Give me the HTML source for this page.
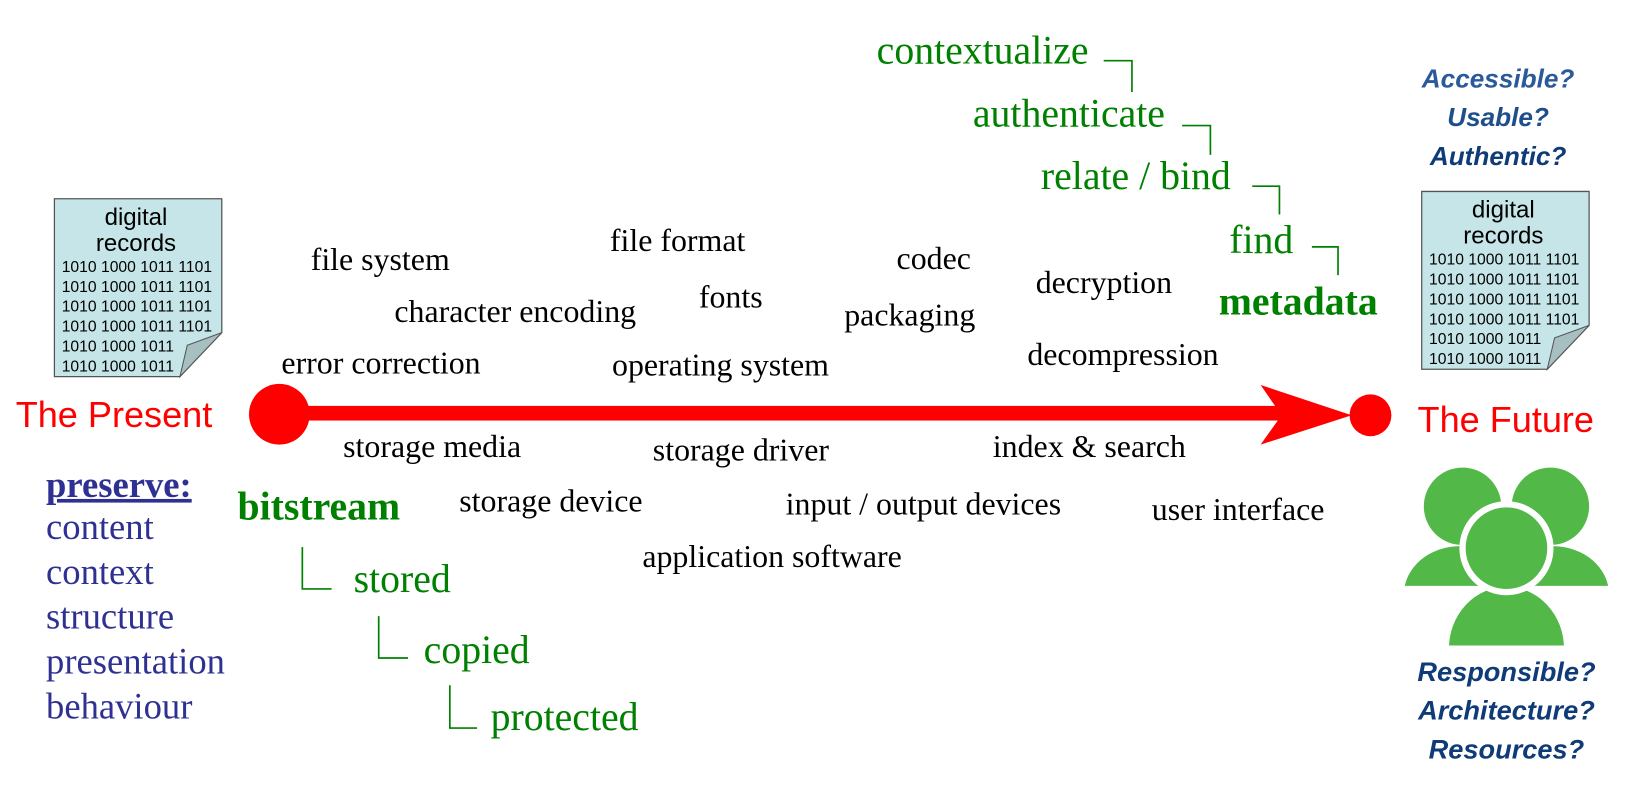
<!DOCTYPE html>
<html><head><meta charset="utf-8"><style>
html,body{margin:0;padding:0;background:#fff;width:1632px;height:794px;overflow:hidden}
svg{display:block}
.s{font-family:"Liberation Serif",serif;font-size:30.5px;fill:#000}
.g{font-family:"Liberation Serif",serif;fill:#008000}
.b{font-family:"Liberation Serif",serif;font-size:35px;fill:#2e3192}
.q{font-family:"Liberation Sans",sans-serif;font-weight:bold;font-style:italic;text-anchor:middle}
.r{font-family:"Liberation Sans",sans-serif;font-size:34.5px;fill:#ff0000}
.d{font-family:"Liberation Sans",sans-serif;fill:#000}
</style></head><body>
<svg width="1632" height="794" viewBox="0 0 1560 759" preserveAspectRatio="none">
<defs>
<g id="doc">
<polygon points="0,0 160,0 160,128 120,170 0,170" fill="#c5e5e8" stroke="#555" stroke-width="1.2"/>
<polygon points="160,128 120,170 127,140" fill="#a7bfc1" stroke="#555" stroke-width="1"/>
<text class="d" x="78" y="25" font-size="23" text-anchor="middle">digital</text>
<text class="d" x="78" y="50" font-size="23" text-anchor="middle">records</text>
<g class="d" font-size="15">
<text x="7" y="70">1010 1000 1011 1101</text>
<text x="7" y="89">1010 1000 1011 1101</text>
<text x="7" y="108">1010 1000 1011 1101</text>
<text x="7" y="127">1010 1000 1011 1101</text>
<text x="7" y="146">1010 1000 1011</text>
<text x="7" y="165">1010 1000 1011</text>
</g>
</g>
</defs>
<use href="#doc" x="52" y="190"/>
<use href="#doc" x="1359" y="183"/>

<g dominant-baseline="middle">
<text class="g" x="838" y="52" font-size="38">contextualize</text>
<text class="g" x="930" y="112" font-size="38">authenticate</text>
<text class="g" x="995" y="172" font-size="38">relate / bind</text>
<text class="g" x="1175" y="233" font-size="38">find</text>
<text class="g" x="1165" y="292" font-size="38" font-weight="bold">metadata</text>

<text class="q" x="1432" y="77" font-size="25" fill="#2a5a9a">Accessible?</text>
<text class="q" x="1432" y="114" font-size="25" fill="#1f4e8c">Usable?</text>
<text class="q" x="1432" y="151" font-size="25" fill="#0f3b78">Authentic?</text>
<text class="q" x="1440" y="644" font-size="26" fill="#0f3b78">Responsible?</text>
<text class="q" x="1440" y="681" font-size="26" fill="#0f3b78">Architecture?</text>
<text class="q" x="1440" y="718" font-size="26" fill="#0f3b78">Resources?</text>

<text class="r" x="15" y="399">The Present</text>
<text class="r" x="1355" y="404">The Future</text>

<text class="s" x="297" y="251">file system</text>
<text class="s" x="583" y="233">file format</text>
<text class="s" x="857" y="250">codec</text>
<text class="s" x="377" y="301">character encoding</text>
<text class="s" x="668" y="287">fonts</text>
<text class="s" x="807" y="304">packaging</text>
<text class="s" x="990" y="273">decryption</text>
<text class="s" x="269" y="350">error correction</text>
<text class="s" x="585" y="352">operating system</text>
<text class="s" x="982" y="342">decompression</text>
<text class="s" x="328" y="430">storage media</text>
<text class="s" x="624" y="433">storage driver</text>
<text class="s" x="949" y="430">index &amp; search</text>
<text class="s" x="439" y="482">storage device</text>
<text class="s" x="751" y="485">input / output devices</text>
<text class="s" x="1101" y="490">user interface</text>
<text class="s" x="614" y="535">application software</text>

<text class="b" x="44" y="467" font-weight="bold" text-decoration="underline">preserve:</text>
<text class="b" x="44" y="507">content</text>
<text class="b" x="44" y="550">context</text>
<text class="b" x="44" y="593">structure</text>
<text class="b" x="44" y="636">presentation</text>
<text class="b" x="44" y="679">behaviour</text>

<text class="g" x="227" y="488" font-size="38" font-weight="bold">bitstream</text>
<text class="g" x="338" y="557" font-size="38">stored</text>
<text class="g" x="405" y="625" font-size="38">copied</text>
<text class="g" x="469" y="689" font-size="38">protected</text>
</g>

<g fill="none" stroke="#008000" stroke-width="1.6">
<polyline points="1055,58 1082,58 1082,88"/>
<polyline points="1130,120 1157,120 1157,148"/>
<polyline points="1197,178 1223,178 1223,205"/>
<polyline points="1254,236 1279,236 1279,263"/>
<polyline points="289,523 289,563 317,563"/>
<polyline points="362,589 362,629 390,629"/>
<polyline points="430,655 430,696 456,696"/>
</g>

<g fill="#ff0000">
<rect x="267" y="388" width="960" height="14"/>
<polygon points="1205,368 1292,397 1205,425 1225,397"/>
<circle cx="267" cy="396" r="29"/>
<circle cx="1310" cy="397" r="20"/>
</g>

<clipPath id="cb"><rect x="1300" y="400" width="260" height="160"/></clipPath>
<clipPath id="cf"><rect x="1300" y="400" width="260" height="217"/></clipPath>
<g fill="#52b848">
<circle cx="1398" cy="484" r="37"/>
<circle cx="1482" cy="484" r="37"/>
<g clip-path="url(#cb)">
<ellipse cx="1396" cy="568" rx="54" ry="46"/>
<ellipse cx="1484" cy="568" rx="54" ry="46"/>
</g>
<g clip-path="url(#cf)">
<ellipse cx="1440" cy="620" rx="58" ry="62" stroke="#fff" stroke-width="6"/>
</g>
<circle cx="1440" cy="524" r="42" stroke="#fff" stroke-width="6"/>
</g>
</svg>
</body></html>
